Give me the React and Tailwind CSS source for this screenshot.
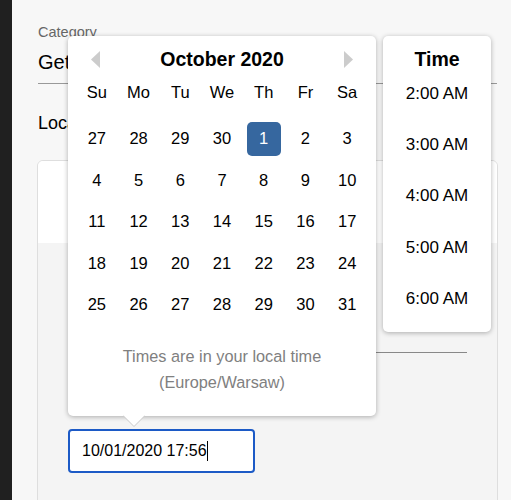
const weeks = [
  [27, 28, 29, 30, 1, 2, 3],
  [4, 5, 6, 7, 8, 9, 10],
  [11, 12, 13, 14, 15, 16, 17],
  [18, 19, 20, 21, 22, 23, 24],
  [25, 26, 27, 28, 29, 30, 31],
];
const dayNames = ["Su", "Mo", "Tu", "We", "Th", "Fr", "Sa"];
const times = ["2:00 AM", "3:00 AM", "4:00 AM", "5:00 AM", "6:00 AM"];

function Calendar() {
  return (
    <div className="absolute left-[68px] top-[36px] h-[380px] w-[308px] rounded-[5px] bg-white px-[8px] shadow-[0_1px_5px_rgba(0,0,0,0.3)]">
      <div className="flex h-[44px] items-center justify-between px-[15px] pt-[2px]">
        <svg width="9" height="17" viewBox="0 0 9 17"><path d="M9 0 L0 8.5 L9 17 Z" fill="#cccccc" /></svg>
        <div className="text-[19.5px] font-bold leading-[22px]">October 2020</div>
        <svg width="9" height="17" viewBox="0 0 9 17"><path d="M0 0 L9 8.5 L0 17 Z" fill="#cccccc" /></svg>
      </div>
      <div className="grid h-[22px] grid-cols-7 items-center text-center text-[16.5px]">
        {dayNames.map((d) => <div key={d}>{d}</div>)}
      </div>
      <div className="mt-[16px]">
        {weeks.map((week, i) => (
          <div key={i} className="grid h-[41.5px] grid-cols-7 items-center text-center text-[16.5px]">
            {week.map((day, j) => (
              <div key={j} className="flex justify-center">
                {i === 0 && day === 1 ? (
                  <div className="flex h-[34px] w-[34px] items-center justify-center rounded-[5px] bg-[#36679f] text-white">{day}</div>
                ) : (
                  <div className="flex h-[34px] w-[34px] items-center justify-center">{day}</div>
                )}
              </div>
            ))}
          </div>
        ))}
      </div>
      <div className="mt-[17px] text-center text-[16.3px] leading-[26px] text-[#808080]">
        <div>Times are in your local time</div>
        <div>(Europe/Warsaw)</div>
      </div>
      <svg className="absolute left-[55px] top-[379px]" width="22" height="12" viewBox="0 0 22 12">
        <path d="M0 0.5 L11 11.5 L22 0.5" fill="white" stroke="#c8c8c8" strokeWidth="1" />
        <rect x="1" y="0" width="20" height="1" fill="white" />
      </svg>
    </div>
  );
}

function TimeList() {
  return (
    <div className="absolute left-[383px] top-[36px] h-[296px] w-[108px] rounded-[5px] bg-white shadow-[0_1px_5px_rgba(0,0,0,0.3)]">
      <div className="h-[32px] pt-[13px] text-center text-[19.5px] font-bold leading-[20px]">Time</div>
      {times.map((t) => (
        <div key={t} className="flex h-[51.25px] items-center justify-center text-[17px]">{t}</div>
      ))}
    </div>
  );
}

export default function App() {
  return (
    <div className="relative flex h-[500px] w-[511px] overflow-hidden bg-[#f7f7f7] font-['Liberation_Sans',Arial,sans-serif] text-black">
      <div className="w-[12px] shrink-0 bg-[#202020]" />
      <div className="flex-1 pl-[26px] pr-[14px] pt-[24px]">
        <div className="text-[14.5px] leading-[16px] text-[#666]">Category</div>
        <div className="mt-[11px] border-b border-[#999] pb-[10px] text-[20px] leading-[22px]">Get started</div>
        <div className="mt-[29px] text-[18px] leading-[20px]">Local time</div>
        <div className="-mx-px mt-[27px] flex h-[400px] flex-col overflow-hidden rounded-[6px] border border-[#dedede]">
          <div className="h-[82px] bg-white" />
          <div className="flex-1 bg-[#f4f4f4] px-[30px]">
            <div className="h-[110px] border-b border-[#888]" />
            <div className="mt-[76px] flex h-[44px] w-[187px] items-center rounded-[4px] border-2 border-[#1c5ac6] bg-white px-[12px] text-[16px]">
              <span>10/01/2020 17:56</span>
              <span className="h-[20px] w-px bg-black" />
            </div>
          </div>
        </div>
      </div>
      <Calendar />
      <TimeList />
    </div>
  );
}
